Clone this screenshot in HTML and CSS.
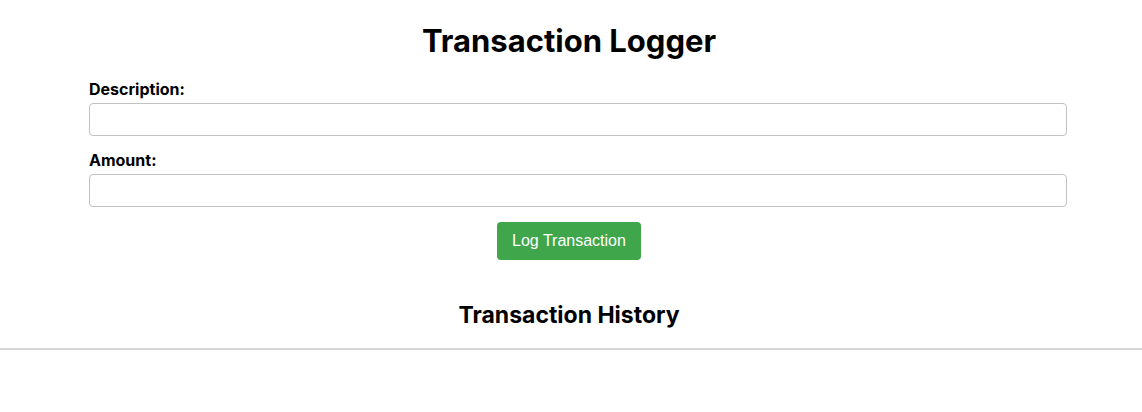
FILE: index.html
```html
<!DOCTYPE html>
<html lang="en">
<head>
<meta charset="utf-8">
<meta name="viewport" content="width=device-width, initial-scale=1">
<title>Transaction Logger</title>
<link rel="stylesheet" href="styles.css">
</head>
<body>
<main class="app">
  <h1 class="title">Transaction Logger</h1>
  <form class="form">
    <div class="field">
      <label class="label" for="description">Description:</label>
      <input class="input" id="description" type="text">
    </div>
    <div class="field">
      <label class="label" for="amount">Amount:</label>
      <input class="input" id="amount" type="number">
    </div>
    <button class="submit" type="submit">Log Transaction</button>
  </form>
  <h2 class="subtitle">Transaction History</h2>
  <section class="history" aria-label="Transaction History"></section>
</main>
</body>
</html>
```

FILE: styles.css
```css
* {
  box-sizing: border-box;
}

body {
  margin: 0;
  background: #fff;
  color: #000;
  font-family: Inter, "Liberation Sans", sans-serif;
  font-size: 16px;
}

.app {
  padding-top: 20px;
}

.title {
  margin: 0 4px 18px 0;
  font-size: 31px;
  line-height: 42px;
  text-align: center;
}

.form {
  display: flex;
  flex-direction: column;
  gap: 15px;
  margin: 0 75px 40px 89px;
}

.field {
  display: flex;
  flex-direction: column;
  gap: 4px;
}

.label {
  font-weight: 700;
  line-height: 19px;
}

.input {
  width: 100%;
  height: 33px;
  padding: 8px;
  border: 1px solid #c2c2c2;
  border-radius: 4px;
  font: inherit;
}

.submit {
  align-self: center;
  margin-right: 18px;
  padding: 10px 15px;
  border: 0;
  border-radius: 4px;
  background: #3fa64b;
  color: #fff;
  font-family: "Liberation Sans", Arial, sans-serif;
  font-size: 16px;
  line-height: 18px;
}

.subtitle {
  margin: 0 4px 18px 0;
  font-size: 23px;
  line-height: 30px;
  text-align: center;
}

.history {
  border-top: 2px solid #d6d6d6;
}
```
